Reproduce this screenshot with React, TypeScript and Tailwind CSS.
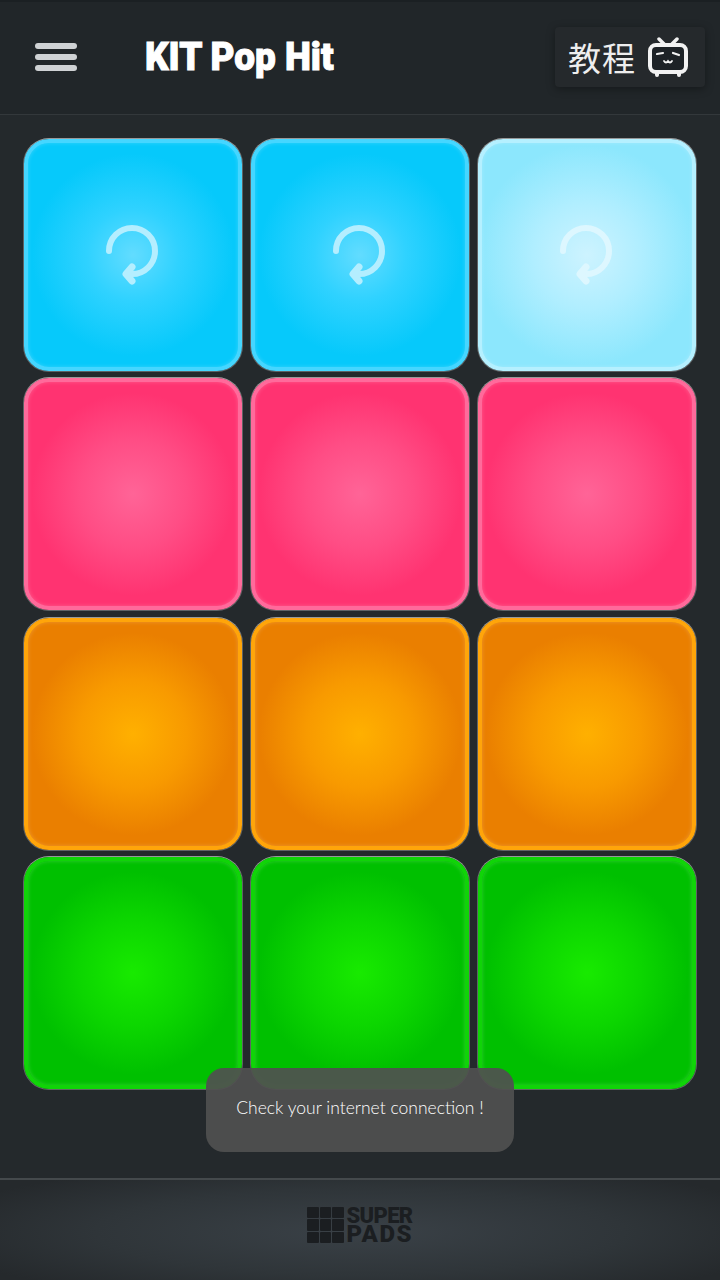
const pads = [
  "border-[#45d6ff] bg-[radial-gradient(circle_at_50%_50%,#62dcff_0%,#2fd2ff_30%,#06c9fb_66%)]",
  "border-[#45d6ff] bg-[radial-gradient(circle_at_50%_50%,#62dcff_0%,#2fd2ff_30%,#06c9fb_66%)]",
  "border-[#b5f0ff] bg-[radial-gradient(circle_at_50%_50%,#cdf3ff_0%,#b0eeff_35%,#8ce7fd_72%)]",
  "border-[#ff6a9b] bg-[radial-gradient(circle_at_50%_50%,#ff6497_0%,#ff4d85_35%,#ff3371_66%)]",
  "border-[#ff6a9b] bg-[radial-gradient(circle_at_50%_50%,#ff6497_0%,#ff4d85_35%,#ff3371_66%)]",
  "border-[#ff6a9b] bg-[radial-gradient(circle_at_50%_50%,#ff6497_0%,#ff4d85_35%,#ff3371_66%)]",
  "border-[#ffa50a] bg-[radial-gradient(circle_at_50%_50%,#ffb000_0%,#f89a00_35%,#ea7f00_66%)]",
  "border-[#ffa50a] bg-[radial-gradient(circle_at_50%_50%,#ffb000_0%,#f89a00_35%,#ea7f00_66%)]",
  "border-[#ffa50a] bg-[radial-gradient(circle_at_50%_50%,#ffb000_0%,#f89a00_35%,#ea7f00_66%)]",
  "border-[#10d408] bg-[radial-gradient(circle_at_50%_50%,#18ea00_0%,#0cd600_35%,#00c000_66%)]",
  "border-[#10d408] bg-[radial-gradient(circle_at_50%_50%,#18ea00_0%,#0cd600_35%,#00c000_66%)]",
  "border-[#10d408] bg-[radial-gradient(circle_at_50%_50%,#18ea00_0%,#0cd600_35%,#00c000_66%)]",
];

function ReplayIcon({ light }: { light: boolean }) {
  return (
    <svg
      width="60"
      height="66"
      viewBox="0 0 60 66"
      fill="none"
      stroke={light ? "#ddf7ff" : "#b4eeff"}
      strokeWidth="6"
      strokeLinecap="round"
      strokeLinejoin="round"
    >
      <path d="M6 29 A23 23 0 1 1 29 52" />
      <path d="M29 45 L23 52 L29 59" strokeWidth="7" />
    </svg>
  );
}

function TvIcon() {
  return (
    <svg width="42" height="40" viewBox="0 0 42 40" fill="none">
      <path d="M12 2 L18 8 M30 2 L24 8" stroke="#f2f2f2" strokeWidth="3.5" strokeLinecap="round" />
      <rect x="3" y="8" width="36" height="27" rx="6" fill="#1d2226" stroke="#f2f2f2" strokeWidth="4" />
      <path d="M10 36 L10 38 M32 36 L32 38" stroke="#f2f2f2" strokeWidth="4" strokeLinecap="round" />
      <path d="M10 17 L16 16 M26 16 L32 18" stroke="#f2f2f2" strokeWidth="2.2" strokeLinecap="round" />
      <path d="M17 24 Q19 27 21 24 Q23 27 25 24" stroke="#f2f2f2" strokeWidth="1.8" strokeLinecap="round" />
    </svg>
  );
}

export default function App() {
  return (
    <div className="relative flex h-[1280px] w-[720px] flex-col overflow-hidden bg-[#24292c] font-['Roboto',sans-serif]">
      <header className="flex h-[115px] shrink-0 items-center border-t-[2px] border-b border-t-[#1b2023] border-b-[#33383b] bg-[#212629] pl-[35px] pr-[15px]">
        <div className="mb-[3px] flex w-[42px] flex-col gap-[5px]">
          <div className="h-[6px] rounded-full bg-[#cfd2d4]" />
          <div className="h-[6px] rounded-full bg-[#cfd2d4]" />
          <div className="h-[6px] rounded-full bg-[#cfd2d4]" />
        </div>
        <h1 className="mb-[2px] ml-[68px] origin-left scale-x-[0.97] text-[38px] leading-none font-black whitespace-nowrap text-white [-webkit-text-stroke:1px_white]">
          KIT Pop Hit
        </h1>
        <button className="mb-[2px] ml-auto flex h-[60px] w-[150px] shrink-0 items-center gap-[11px] rounded-[4px] bg-[#25292c] pl-[13px] shadow-[0_2px_8px_rgba(0,0,0,0.35)]">
          <span className="font-['Noto_Sans_CJK_SC',sans-serif] text-[33px] leading-none tracking-[1px] text-[#eeeeee]">
            教程
          </span>
          <TvIcon />
        </button>
      </header>

      <main className="grid flex-1 grid-cols-3 content-start gap-x-[6.5px] gap-y-[5.33px] px-[23px] pt-[23px]">
        {pads.map((pad, i) => (
          <div
            key={i}
            className={`m-px flex h-[232px] items-center justify-center rounded-[25px] border-[4px] shadow-[inset_0_0_4px_rgba(255,255,255,0.2),0_-1px_0_rgba(190,190,190,0.6),0_0_0_1px_rgba(170,170,170,0.45)] ${pad}`}
          >
            {i < 3 && <ReplayIcon light={i === 2} />}
          </div>
        ))}
      </main>

      <footer className="flex h-[102px] shrink-0 items-center justify-center gap-[3px] border-t-[2px] border-[#44494c] bg-[radial-gradient(ellipse_440px_72px_at_50%_52%,#3a4147_0%,#2f3539_60%,#25292c_100%)] pb-[10px]">
        <div className="grid grid-cols-3 gap-[1px]">
          {Array.from({ length: 9 }).map((_, i) => (
            <div key={i} className="h-[11.5px] w-[11.5px] rounded-[1px] bg-[#1b1e21]" />
          ))}
        </div>
        <div className="flex flex-col font-black text-[#1b1e21]">
          <span className="text-[22px] leading-[18px] tracking-[-0.7px]">SUPER</span>
          <span className="text-[24px] leading-[18px] tracking-[1.5px]">PADS</span>
        </div>
      </footer>

      <div className="absolute left-[206px] top-[1068px] flex h-[84px] w-[308px] items-center justify-center rounded-[18px] bg-[rgba(80,80,80,0.93)] pb-[3px]">
        <span className="font-['Lato',sans-serif] text-[17.5px] font-light whitespace-nowrap text-white">
          Check your internet connection !
        </span>
      </div>
    </div>
  );
}
